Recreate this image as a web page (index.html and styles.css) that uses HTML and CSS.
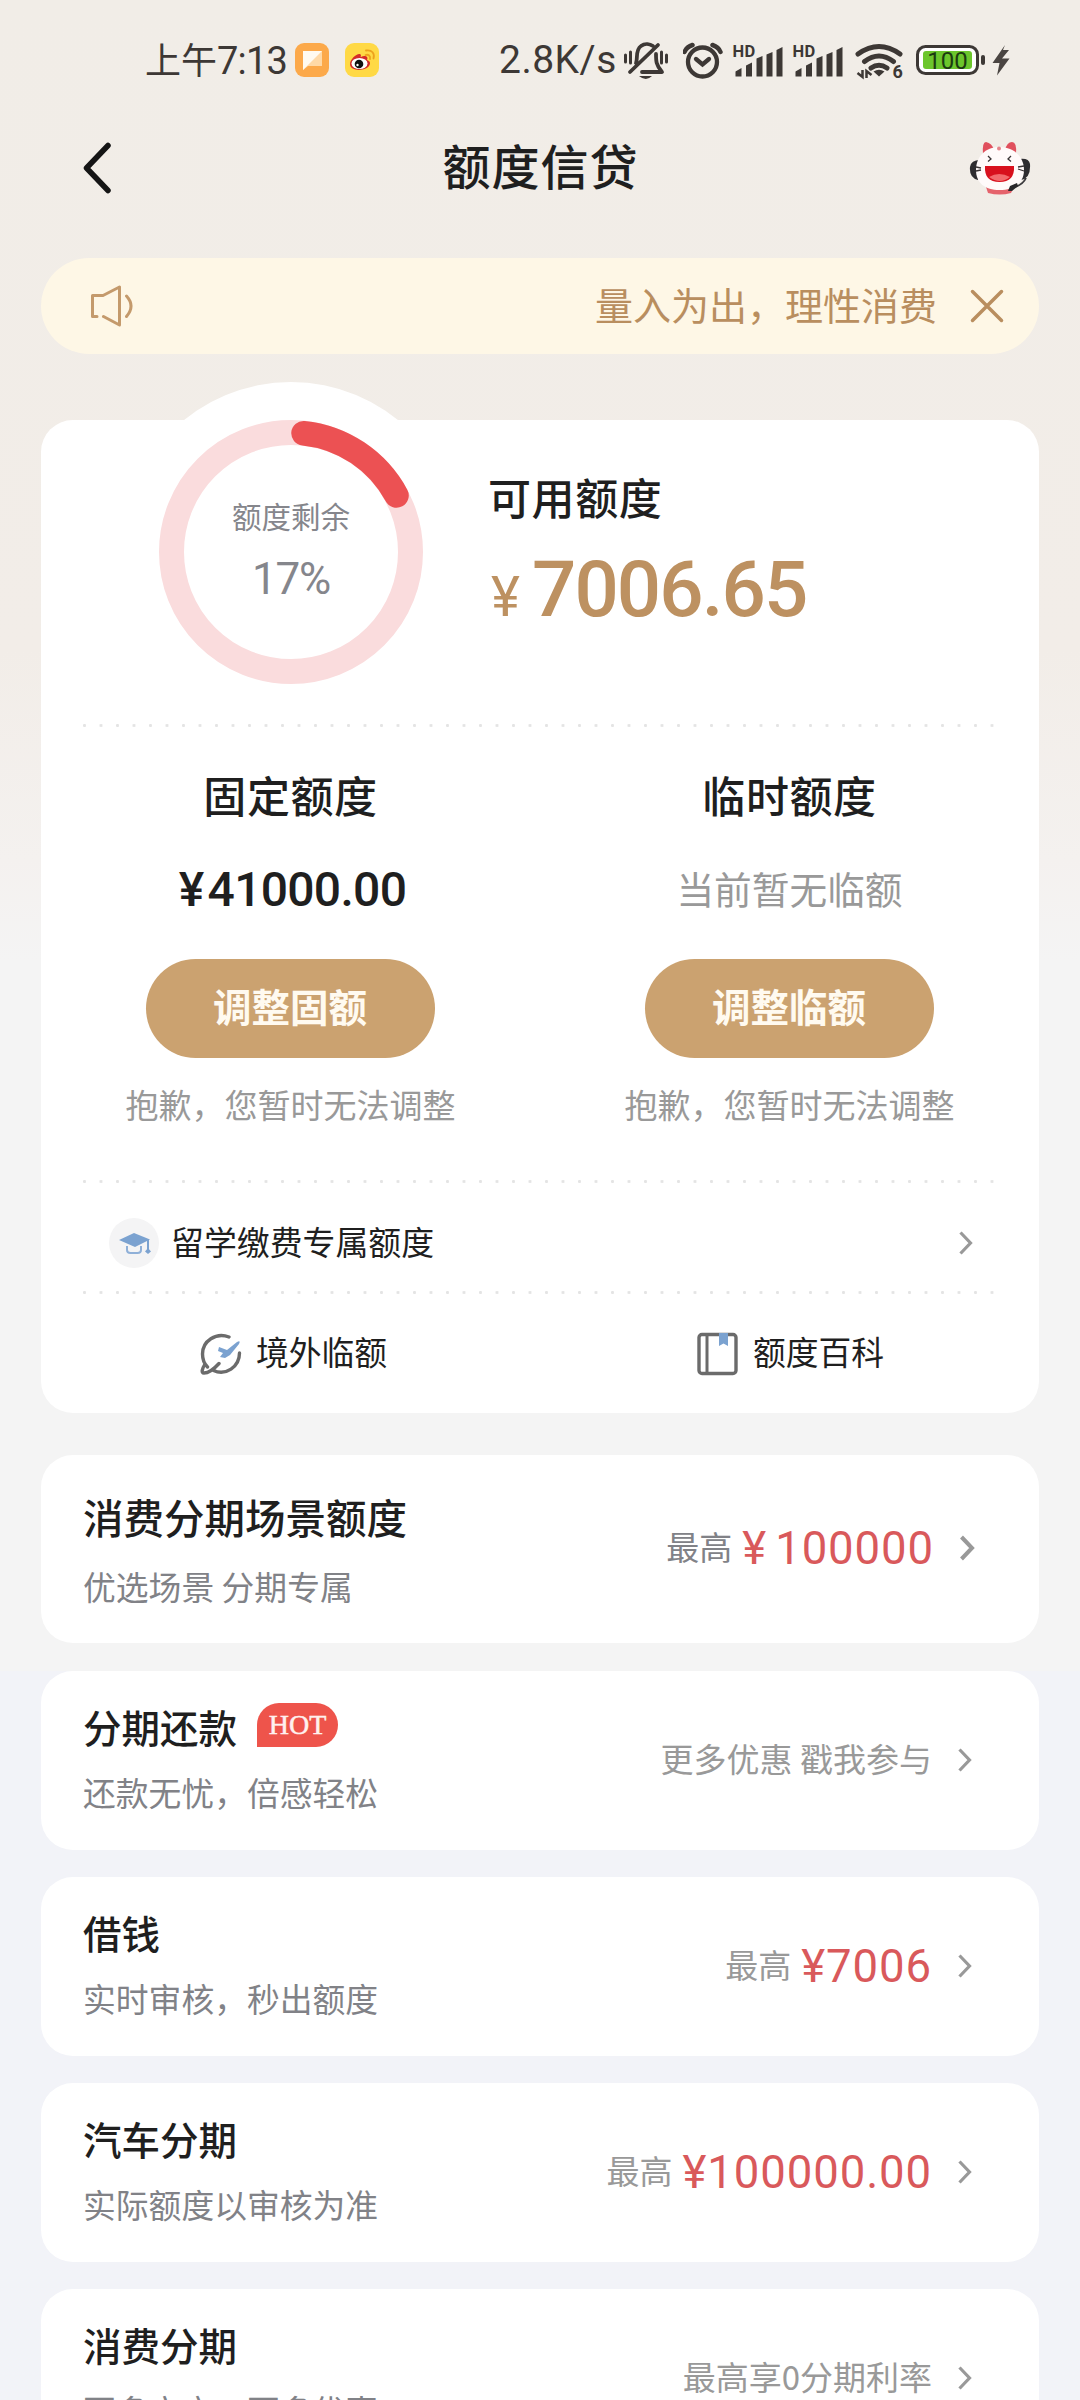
FILE: index.html
```html
<!DOCTYPE html>
<html lang="zh-CN">
<head>
<meta charset="utf-8">
<title>额度信贷</title>
<link rel="stylesheet" href="styles.css">
</head>
<body>
<div class="screen">
  <div class="status">
    <span class="clock">上午<span class="latin">7:13</span></span>
    <svg class="app" width="34" height="34" viewBox="0 0 34 34"><rect width="34" height="34" rx="9" fill="#fca94a"/><path d="M8 8h19v15H13l-5 4z" fill="#ffd9a6"/><path d="M8 8h19L8 27z" fill="#fffaf0"/></svg>
    <svg class="app app-weibo" width="34" height="34" viewBox="0 0 34 34"><rect width="34" height="34" rx="9" fill="#ffd945"/><path d="M5 21c0-5 7-11 10-10 2 1 0 3 1 3 3-2 8-1 6 3 3 1 4 3 2 6-3 5-19 6-19-2z" fill="#d52b2a"/><ellipse cx="14.500" cy="20.500" rx="8" ry="5.600" fill="#fff"/><circle cx="14" cy="21" r="4.300" fill="#111"/><circle cx="12.500" cy="22" r="1.200" fill="#fff"/><path d="M20.500 12c3-1 5 1 4.500 4M21 7.500c6-1 9 3 7.500 8" fill="none" stroke="#eda21d" stroke-width="1.800" stroke-linecap="round"/></svg>
    <span class="speed latin">2.8K/s</span>
    <svg class="bell" width="46" height="40" viewBox="623 40 46 40" fill="none" stroke="#3d3835" stroke-width="3.800" stroke-linecap="round" stroke-linejoin="round"><path d="M630 72l28-27M636 63c2-4-1-13 5-17 4-3 9-2 12 0M656 54c0 7 0 11 6 18h-20"/><path d="M625.500 55v7M630.500 52v11M661.500 52v11M666.500 55v7" stroke-width="3"/><path d="M639 76h13q-6 6-13 0z" fill="#3d3835" stroke="none"/></svg>
    <svg class="alarm" width="40" height="38" viewBox="683 40 40 38" fill="none" stroke="#3d3835" stroke-width="4.300"><circle cx="702.500" cy="61" r="14.500"/><path d="M696 58l6.500 5.500L709 58" stroke-linecap="round"/><path d="M684.500 51q2-5 8-7M720.500 51q-2-5-8-7" stroke-width="4.500" stroke-linecap="round"/></svg>
    <svg class="signal" width="52" height="38" viewBox="732 40 52 38"><text x="732.500" y="56" class="hd">HD</text><path d="M735.500 75.500v-5l6-3.500v8.500zM746 75.500v-11l6-3v14zM756.500 75.500v-18l6-2.500v20.500zM766.500 75.500v-22l6-2.500v24.500zM776.500 75.500V49l6-3v29.500z" fill="#3d3835"/></svg>
    <svg class="signal" width="52" height="38" viewBox="732 40 52 38"><text x="732.500" y="56" class="hd">HD</text><path d="M735.500 75.500v-5l6-3.500v8.500zM746 75.500v-11l6-3v14zM756.500 75.500v-18l6-2.500v20.500zM766.500 75.500v-22l6-2.500v24.500zM776.500 75.500V49l6-3v29.500z" fill="#3d3835"/></svg>
    <svg class="wifi" width="50" height="40" viewBox="855 40 50 40" fill="none" stroke="#3d3835" stroke-width="5"><path d="M858 54q21-15 42 0M864.500 61.500q14.500-11 29 0M871 68q8-5.500 16 0" stroke-linecap="round"/><path d="M873.500 71.500q5.500-3.500 11 0l-5.500 5z" fill="#3d3835" stroke="none"/><path d="M862.500 70v7l-5-4M866.500 78v-7l5 4" stroke-width="2.500"/><text x="892.500" y="78" class="six">6</text></svg>
    <svg class="battery" width="70" height="32" viewBox="917 44 70 32"><rect x="918.500" y="46.500" width="60" height="27" rx="8" fill="#fff" stroke="#3d3835" stroke-width="3"/><rect x="924" y="51" width="49" height="18" rx="3" fill="#6cc62c"/><rect x="982" y="55" width="4" height="10" rx="2" fill="#3d3835"/><text x="948.500" y="69" class="pct">100</text></svg>
    <svg class="bolt" width="20" height="32" viewBox="992 44 20 32"><path d="M1006 45L993.500 63h7L998 75.500l12.500-17h-7.500l7-8.500h-6z" fill="#4a4542"/></svg>
  </div>

  <header class="nav">
    <svg class="back" width="32" height="52" viewBox="0 0 32 52"><path d="M27 3.500L5.500 26 27 48.500" fill="none" stroke="#151515" stroke-width="5.500" stroke-linecap="round" stroke-linejoin="round"/></svg>
    <h1>额度信贷</h1>
    <svg class="mascot" width="64" height="54" viewBox="0 0 64 54"><path d="M12 19q-9 0-10 7-1 11 8 13zM52 18q9-1 10 5 1 14-9 16z" fill="#2e2d30"/><path d="M15 13q-1-12 3-12 6 1 8 8zM37 9q2-8 7-8 5 0 4 12z" fill="#e0505d"/><path d="M18 46q13 4 28 0l-3 6q-11 3-23 0z" fill="#e5636c"/><path d="M31.500 6C46 6 56 16 56 29S46 49 31.500 49 8 42 8 29 17 6 31.500 6z" fill="#fffafa"/><path d="M17 25h29q1 16-14.500 16T17 25z" fill="#d8101d"/><path d="M21 36q10-6 21 0-10 8-21 0z" fill="#f26a6d"/><path d="M20 15l3 3-3 2.500M43 15l-3 3 3 2.500M8 26l5 1M8 30l5-1M50 26l6-1M50 28l6 2" fill="none" stroke="#3a3536" stroke-width="1.300"/><circle cx="31" cy="7.500" r="2" fill="#e5858b"/><path d="M58 37q-3 7-14 10" fill="none" stroke="#39383b" stroke-width="1.800"/><path d="M40 50l2-5 7-3 1 3-6 5z" fill="#29282a"/></svg>
  </header>

  <div class="notice">
    <svg width="46" height="44" viewBox="0 0 46 44" fill="none" stroke="#c49a6c" stroke-width="3" stroke-linecap="round" stroke-linejoin="round"><path d="M8 32.500H3.500V11.500H14L30.500 3V41L14.500 32.500M37.500 12q9 10 0 20.500"/></svg>
    <p>量入为出，理性消费</p>
    <svg class="close" width="34" height="34" viewBox="0 0 34 34"><path d="M2.500 2.500l29 29M31.500 2.500l-29 29" stroke="#b98e5f" stroke-width="3.500" stroke-linecap="round"/></svg>
  </div>

  <section class="card quota">
    <div class="overview">
      <div class="dial">
        <svg class="ring" width="340" height="340" viewBox="-170 -170 340 340"><circle r="170" fill="#fff"/><circle r="119.500" fill="none" stroke="#fadcdd" stroke-width="25"/><path d="M12.500-118.800A119.500 119.500 0 0 1 105.500-56.500" fill="none" stroke="#ec5153" stroke-width="24.500" stroke-linecap="round"/></svg>
        <div class="dial-label">
          <span>额度剩余</span>
          <b class="latin">17%</b>
        </div>
      </div>
      <div class="available">
        <h2>可用额度</h2>
        <p class="latin"><small>¥</small>7006.65</p>
      </div>
    </div>
    <div class="dots"></div>
    <div class="columns">
      <div class="col">
        <h2>固定额度</h2>
        <p class="sum latin"><i>¥</i>41000.00</p>
        <button>调整固额</button>
        <p class="hint">抱歉，您暂时无法调整</p>
      </div>
      <div class="col">
        <h2>临时额度</h2>
        <p class="none">当前暂无临额</p>
        <button>调整临额</button>
        <p class="hint">抱歉，您暂时无法调整</p>
      </div>
    </div>
    <div class="dots"></div>
    <div class="study">
      <svg width="50" height="50" viewBox="0 0 50 50"><circle cx="25" cy="25" r="25" fill="#f4f4f5"/><path d="M10 22l15-7 16 6.500L26 29z" fill="#7ba2d0"/><path d="M18 28v4q0 3 3.500 3h7q3.500 0 3.500-3v-4" fill="none" stroke="#8fb0d8" stroke-width="2"/><path d="M39 22v13" stroke="#7ba2d0" stroke-width="2"/><path d="M39 30l3 3.500-3 2.500-3-2.500z" fill="#7ba2d0"/></svg>
      <span>留学缴费专属额度</span>
      <svg class="chev" width="16" height="26" viewBox="0 0 16 26"><path d="M2.500 2.500L12.500 13l-10 10.500"/></svg>
    </div>
    <div class="dots"></div>
    <div class="links">
      <div class="link">
        <svg width="42" height="44" viewBox="0 0 42 44" fill="none" stroke="#6b6b6b" stroke-width="3.400" stroke-linecap="round"><path d="M29 5C16 0 2.500 9 2.500 22c0 6 2 10 5 13M39.500 21c0 14-14 23-26 17.500M5 32c-3 5-4 9-1 9 4 0 10-4 15-9.500"/><path d="M19 15l8 3 10-8q4-2 2 2l-9 11-5 3-5-1 3-4-5-2z" fill="#7ba2d0" stroke="none"/></svg>
        <span>境外临额</span>
      </div>
      <div class="link">
        <svg width="42" height="44" viewBox="0 0 42 44"><rect x="2" y="2.500" width="37" height="39" rx="3" fill="none" stroke="#6b6b6b" stroke-width="3.400"/><path d="M10 2v40" stroke="#6b6b6b" stroke-width="3"/><path d="M22 1h9v13l-4.500-2.500L22 14z" fill="#7ba2d0"/></svg>
        <span>额度百科</span>
      </div>
    </div>
  </section>

  <section class="card item scene">
    <div class="info"><h3>消费分期场景额度</h3><p>优选场景 分期专属</p></div>
    <div class="side dark">最高<span class="price latin"><i>¥</i>100000</span></div>
    <svg class="chev bold" width="16" height="28" viewBox="0 0 16 28"><path d="M2.500 3L13 14 2.500 25"/></svg>
  </section>

  <section class="card item repay">
    <div class="info"><h3>分期还款<em>HOT</em></h3><p>还款无忧，倍感轻松</p></div>
    <div class="side plain">更多优惠 戳我参与</div>
    <svg class="chev" width="16" height="26" viewBox="0 0 16 26"><path d="M2.500 2.500L12.500 13l-10 10.500"/></svg>
  </section>

  <section class="card item">
    <div class="info"><h3>借钱</h3><p>实时审核，秒出额度</p></div>
    <div class="side">最高<span class="price latin">¥7006</span></div>
    <svg class="chev" width="16" height="26" viewBox="0 0 16 26"><path d="M2.500 2.500L12.500 13l-10 10.500"/></svg>
  </section>

  <section class="card item">
    <div class="info"><h3>汽车分期</h3><p>实际额度以审核为准</p></div>
    <div class="side">最高<span class="price latin">¥100000.00</span></div>
    <svg class="chev" width="16" height="26" viewBox="0 0 16 26"><path d="M2.500 2.500L12.500 13l-10 10.500"/></svg>
  </section>

  <section class="card item">
    <div class="info"><h3>消费分期</h3><p>更多商户，更多优惠</p></div>
    <div class="side plain">最高享0分期利率</div>
    <svg class="chev" width="16" height="26" viewBox="0 0 16 26"><path d="M2.500 2.500L12.500 13l-10 10.500"/></svg>
  </section>
</div>
</body>
</html>
```
FILE: styles.css
```css
* { box-sizing: border-box; margin: 0; padding: 0; }
html, body { height: 2400px; overflow: hidden; }
body { font-family: "Noto Sans CJK SC", sans-serif; color: #1f1f1f; }
svg { display: block; flex: none; }
i { font-style: normal; }
.latin { font-family: Roboto, "Noto Sans CJK SC", sans-serif; }

.screen {
  width: 1080px; height: 2400px; overflow: hidden; padding: 0 41px;
  display: flex; flex-direction: column;
  background:
    linear-gradient(#f1ede7 0, #f2ede8 650px, #f4f1ef 860px, #f4f4f4 960px) 0 0 / 100% 1671px no-repeat,
    #f2f3f8;
}
.screen > * { flex: none; }

/* status bar */
.status { height: 120px; padding-left: 104px; display: flex; align-items: center; color: #3d3835; }
.clock { width: 150px; padding-bottom: 2px; font-size: 36px; line-height: 44px; white-space: nowrap; }
.clock .latin { font-size: 38px; letter-spacing: -.8px; }
.app-weibo { margin-left: 16px; }
.speed { width: 124px; margin-left: 120px; font-size: 39px; line-height: 50px; letter-spacing: .5px; white-space: nowrap; }
.alarm { margin-left: 14px; }
.signal { margin-left: 9px; }
.signal + .signal { margin-left: 8px; }
.wifi { margin-left: 11px; }
.battery { margin-left: 11px; }
.bolt { margin-left: 5px; }
.hd { font: 700 16.500px Roboto, sans-serif; letter-spacing: .4px; fill: #3d3835; }
.six { font: 700 18px Roboto, sans-serif; fill: #3d3835; stroke: none; }
.pct { font: 400 24px Roboto, sans-serif; fill: #1c3a10; text-anchor: middle; }

/* title bar */
.nav { height: 96px; padding: 0 7px 0 40px; display: flex; align-items: center; justify-content: space-between; }
.nav h1 { flex: 1; padding: 0 0 8px; text-align: center; font-size: 48px; font-weight: 500; letter-spacing: 1px; line-height: 60px; }

/* notice */
.notice {
  height: 96px; margin-top: 42px; padding: 0 35px 0 48px; border-radius: 48px;
  background: #fef7e6; color: #b98e5f; display: flex; align-items: center;
}
.notice p { flex: 1; padding-bottom: 4px; text-align: right; font-size: 38px; line-height: 50px; }
.notice .close { margin-left: 33px; }

.card { background: #fff; border-radius: 32px; }
h2 { font-size: 43px; font-weight: 500; letter-spacing: .6px; line-height: 60px; }

/* quota card */
.quota { height: 993px; margin-top: 66px; padding: 0 42px; }
.overview { height: 304px; display: flex; }
.dial { position: relative; width: 416px; height: 264px; }
.ring { position: absolute; left: 38px; top: -38px; }
.dial-label { position: absolute; left: 38px; top: 70px; width: 340px; display: flex; flex-direction: column; align-items: center; color: #85868c; }
.dial-label span { font-size: 29.500px; line-height: 50px; }
.dial-label b { font-size: 44px; font-weight: 400; line-height: 60px; margin-top: 9px; letter-spacing: -1.200px; }
.available { margin-left: -11px; padding-top: 46px; }
.available p { font-size: 78px; font-weight: 500; line-height: 90px; color: #bd9161; letter-spacing: -1.900px; margin-top: 19px; white-space: nowrap; }
.available small { font-size: 55px; font-weight: 400; margin: 0 14px 0 3px; }
.dots { height: 3px; background: radial-gradient(circle at 1.500px 1.500px, #e4e4e4 1.200px, transparent 1.900px) 0 0 / 16.500px 3px; }
.columns { display: flex; height: 453px; margin: 0 -42px; padding-top: 37px; }
.col { flex: 1; display: flex; flex-direction: column; align-items: center; }
.sum { height: 60px; margin-top: 36px; padding-left: 4px; font-size: 48px; font-weight: 500; line-height: 60px; letter-spacing: -.7px; }
.sum i { margin-right: 4px; }
.none { height: 60px; margin-top: 36px; font-size: 37.700px; line-height: 56px; color: #999; }
button {
  width: 289px; height: 99px; margin: 39px 1px 0 0; padding-bottom: 8px; border: 0; border-radius: 50px; background: #cba270;
  color: #fffaf0; font: 700 38.500px/84px "Noto Sans CJK SC", sans-serif;
}
.hint { margin-top: 21px; font-size: 33px; line-height: 50px; color: #999; }
.study { height: 108px; padding: 12px 23px 0 26px; display: flex; align-items: center; font-size: 32.900px; line-height: 46px; }
.study span { flex: 1; padding: 0 0 5px 12px; }
.links { display: flex; height: 119px; margin: 0 -42px; padding: 0 0 0 4px; font-size: 32.800px; line-height: 46px; }
.link { flex: 1; display: flex; align-items: center; justify-content: center; gap: 14px; }
.link span { padding-bottom: 5px; }
.chev { fill: none; stroke: #999; stroke-width: 3.200px; }
.chev.bold { stroke-width: 4px; }

/* list cards */
.item { height: 179px; margin-top: 27px; padding: 0 66px 0 42px; display: flex; align-items: center; }
.item .chev { margin-bottom: 2px; }
.info { flex: 1; }
.info h3 { font-size: 38.500px; font-weight: 500; line-height: 50px; margin-top: -4px; display: flex; align-items: center; }
.info p { margin-top: 17px; font-size: 32.800px; line-height: 48px; color: #818287; }
.info em {
  width: 81px; height: 44px; margin: 0 0 2px 20px; border-radius: 22px 22px 22px 0; background: #ee544b;
  color: #fff1ee; font: 500 28px/44px "Liberation Serif", serif; -webkit-text-stroke: .5px #fff1ee; text-align: center;
}
.side { margin-right: 25px; padding-bottom: 3px; font-size: 33px; line-height: 50px; color: #999; white-space: nowrap; }
.side.plain { padding-bottom: 6px; }
.side.dark { padding-bottom: 4px; color: #818287; }
.price { margin-left: 10px; font-size: 45.500px; color: #d9595b; vertical-align: -4px; letter-spacing: .9px; line-height: 50px; }
.price i { margin-right: 8px; }
.scene { height: 188px; margin-top: 42px; padding-right: 64px; }
.scene h3 { margin-top: 3px; font-size: 40.500px; }
.scene p { margin-top: 20px; }
.repay { margin-top: 28px; }
```
